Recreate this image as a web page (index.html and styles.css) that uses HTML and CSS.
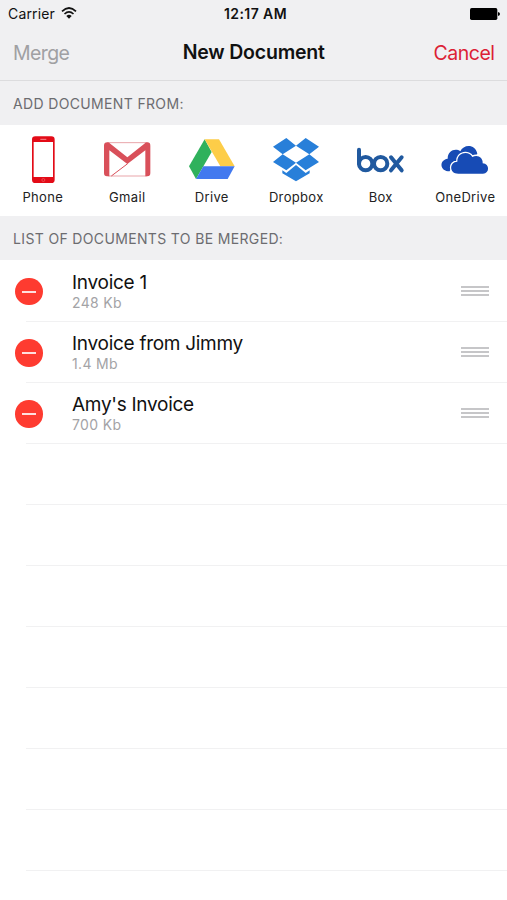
FILE: index.html
```html
<!DOCTYPE html>
<html lang="en">
<head>
<meta charset="utf-8">
<title>New Document</title>
<link rel="stylesheet" href="styles.css">
</head>
<body>
<header class="top">
  <div class="status">
    <div class="carrier"><span>Carrier</span>
      <svg class="wifi" viewBox="0 0 48 36"><g fill="none" stroke="#111" stroke-width="5"><path d="M3 13Q24-7 45 13"/><path d="M10.500 21Q24 8 37.500 21"/></g><path d="M16 27Q24 19 32 27L24 35Z" fill="#111"/></svg>
    </div>
    <span class="time">12:17 AM</span>
    <svg class="battery" viewBox="0 0 90 36"><rect width="82" height="36" rx="5"/><path d="M84 12Q90 13 90 18T84 24Z"/></svg>
  </div>
  <nav class="nav">
    <span class="merge">Merge</span>
    <h1>New Document</h1>
    <span class="cancel">Cancel</span>
  </nav>
</header>
<h2 class="section">ADD DOCUMENT FROM:</h2>
<div class="sources">
  <div class="source">
    <svg viewBox="0 0 253.500 180"><rect x="96" y="34" width="68" height="140" rx="10" fill="#e30b17"/><rect x="101" y="51" width="58" height="105" fill="#fff"/><path d="M121 43h18" stroke="#f58a8f" stroke-width="3"/><circle cx="130" cy="165" r="4.500" fill="none" stroke="#f0646b" stroke-width="2"/></svg>
    <span>Phone</span>
  </div>
  <div class="source">
    <svg viewBox="255 0 253.500 180"><path d="M322 53H442M325 153H440" stroke="#e9a5aa" stroke-width="3"/><path d="M383 116L334 153" stroke="#d9505a" stroke-width="3"/><path d="M312 62Q312 52 322 52Q327 52 331 56L382 97L433 56Q437 52 442 52Q451 52 451 62V144Q451 154 442 154H436V76L382 117L328 76V154H321Q312 154 312 144Z" fill="#d9505a"/></svg>
    <span>Gmail</span>
  </div>
  <div class="source">
    <svg viewBox="-3 0 253.500 180"><path d="M104 43L57 124L78 162L125 81Z" fill="#2fb15c"/><path d="M104 43H147L194 124H151Z" fill="#fdcd48"/><path d="M100 124H194L173 162H78Z" fill="#4279ef"/></svg>
    <span>Drive</span>
  </div>
  <div class="source">
    <svg viewBox="252 0 253.500 180"><g fill="#287fd9"><path d="M349 39L378 62L338 88L309 65ZM407 39L447 65L418 88L378 62ZM338 88L378 113L349 136L309 111ZM418 88L447 111L407 136L378 113Z"/><path d="M337 136L349 144L378 120L407 144L419 136V145L378 169L337 145Z"/></g></svg>
    <span>Dropbox</span>
  </div>
  <div class="source">
    <svg viewBox="3 0 253.500 180"><g fill="none" stroke="#20599f" stroke-width="12" stroke-linecap="round" stroke-linejoin="round"><path d="M66 74V116"/><circle cx="86" cy="116" r="20"/><circle cx="131" cy="116" r="20"/><path d="M162 97L194 136M194 97L162 136"/></g></svg>
    <span>Box</span>
  </div>
  <div class="source">
    <svg viewBox="258 0 253.500 180"><g fill="#174bb5"><path d="M338 139C308 139 305 105 332 101C332 76 356 69 370 79C379 57 416 56 421 87L400 110H350Z"/><path d="M364 146C336 146 336 111 361 110C361 81 396 77 406 96C421 87 439 97 437 115C459 116 458 146 438 146Z" stroke="#fff" stroke-width="8" paint-order="stroke"/></g></svg>
    <span>OneDrive</span>
  </div>
</div>
<h2 class="section">LIST OF DOCUMENTS TO BE MERGED:</h2>
<ul class="list">
  <li class="row"><i class="remove"></i><div class="info"><span class="name">Invoice 1</span><span class="size">248 Kb</span></div><i class="handle"></i></li>
  <li class="row"><i class="remove"></i><div class="info"><span class="name">Invoice from Jimmy</span><span class="size">1.4 Mb</span></div><i class="handle"></i></li>
  <li class="row"><i class="remove"></i><div class="info"><span class="name">Amy's Invoice</span><span class="size">700 Kb</span></div><i class="handle"></i></li>
  <li class="row"></li><li class="row"></li><li class="row"></li><li class="row"></li><li class="row"></li><li class="row"></li><li class="row"></li>
</ul>
</body>
</html>
```
FILE: styles.css
```css
* { box-sizing: border-box; }
body {
  margin: 0;
  height: 900px;
  overflow: hidden;
  background: #fff;
  color: #111;
  font-family: Inter, "Liberation Sans", sans-serif;
}
h1, h2, ul { margin: 0; padding: 0; }
.top { height: 81px; background: #f0f0f2; border-bottom: 1px solid #dcdcde; }
.status {
  display: grid;
  grid-template-columns: 1fr auto 1fr;
  align-items: center;
  height: 28px;
  padding: 0 7px 0 8px;
  font-size: 14px;
  line-height: 28px;
}
.carrier { display: flex; align-items: center; gap: 6px; letter-spacing: 0.15px; }
.wifi { width: 16px; height: 12px; margin-top: -2px; }
.time { font-weight: 600; font-size: 14px; letter-spacing: 0.4px; margin-left: 3px; }
.battery { width: 30px; height: 12px; justify-self: end; margin-top: -1px; fill: #000; }
.nav {
  display: grid;
  grid-template-columns: 1fr auto 1fr;
  height: 48px;
  padding: 0 12.500px 0 13px;
  font-size: 19.500px;
  line-height: 49px;
  letter-spacing: -0.5px;
}
.nav h1 { font-size: 19.500px; font-weight: 600; letter-spacing: -0.2px; }
.merge { color: #a0a0a3; letter-spacing: -0.6px; line-height: 50px; }
.cancel { color: #dc1f36; justify-self: end; line-height: 50px; }
.section {
  height: 44px;
  padding-left: 13px;
  background: #f0f0f2;
  color: #6c6c70;
  font-size: 14px;
  font-weight: 400;
  line-height: 45px;
  letter-spacing: 0.35px;
}
.sources { display: grid; grid-template-columns: repeat(6, 1fr); height: 91px; }
.source { display: flex; flex-direction: column; align-items: center; color: #222; }
.source svg { width: 84.500px; height: 60px; }
.source span { font-size: 13px; line-height: 25px; margin-left: 1px; white-space: nowrap; letter-spacing: 0.33px; }
.list { list-style: none; padding-top: 0.700px; }
.row {
  display: flex;
  align-items: center;
  height: 61.050px;
  padding: 0 18px 0 15px;
  background: linear-gradient(#f1f1f2, #f1f1f2) 100% 100% / calc(100% - 26px) 1px no-repeat;
}
.remove {
  display: flex;
  align-items: center;
  justify-content: center;
  width: 27.500px;
  height: 27.500px;
  margin-top: 1px;
  border-radius: 50%;
  background: #fe3b30;
}
.remove::after { content: ""; width: 14px; height: 2px; background: #ffe0de; }
.info { display: flex; flex-direction: column; flex: 1; margin: 1px 0 0 29.500px; }
.name { line-height: 22px; font-size: 19px; letter-spacing: -0.28px; width: max-content; }
.size { line-height: 18px; font-size: 14px; letter-spacing: 0.35px; color: #a3a3a6; width: max-content; }
.handle {
  width: 28px;
  height: 10px;
  margin-top: -1px;
  background: repeating-linear-gradient(#c6c6c8 0 2px, transparent 2px 4px);
}
```
